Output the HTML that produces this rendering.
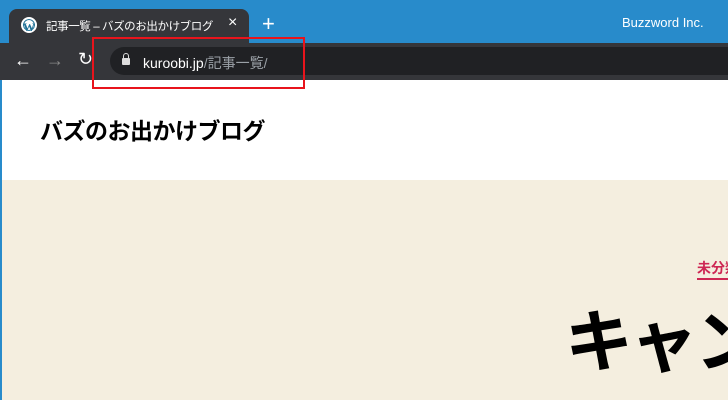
<!DOCTYPE html>
<html><head><meta charset="utf-8"><style>
*{margin:0;padding:0;box-sizing:border-box}
html,body{width:728px;height:400px;overflow:hidden}
body{position:relative;background:#f4eedf;font-family:"Liberation Sans","Noto Sans CJK JP",sans-serif}
.a{position:absolute;white-space:nowrap}
#clip{position:absolute;left:0;top:0;width:728px;height:400px;overflow:hidden}
</style></head><body><div id="clip">
<div class="a" style="left:0;top:0;width:728px;height:43px;background:#288bcb"></div>
<div class="a" style="left:9px;top:9px;width:240px;height:36px;background:#35363a;border-radius:8px 8px 0 0"></div>
<div class="a" style="left:21px;top:17px;width:16px;height:16px;border-radius:50%;background:#fff;color:#207196;font:bold 12px 'Liberation Serif',serif;text-align:center;line-height:16px;border:2px solid #fff;box-shadow:inset 0 0 0 1px #207196">W</div>
<div class="a" style="left:46px;top:18px;color:#fff;font-size:11.5px;letter-spacing:-0.4px">記事一覧 – バズのお出かけブログ</div>
<div class="a" style="left:228px;top:14px;color:#fff;font-size:16px">×</div>
<div class="a" style="left:262px;top:12px;color:#fff;font-size:22px;line-height:24px">+</div>
<div class="a" style="left:622px;top:15px;color:#fff;font-size:13px">Buzzword Inc.</div>
<div class="a" style="left:0;top:43px;width:728px;height:37px;background:#35363a"></div>
<div class="a" style="left:14px;top:50px;color:#fff;font-size:18px">←</div>
<div class="a" style="left:46px;top:50px;color:#888;font-size:18px">→</div>
<div class="a" style="left:78px;top:49px;color:#fff;font-size:18px">↻</div>
<div class="a" style="left:110px;top:47px;width:618px;height:28px;background:#202124;border-radius:14px 0 0 14px"></div>
<div class="a" style="left:122px;top:58px;width:8px;height:7px;background:#ddd;border-radius:1px"></div>
<div class="a" style="left:123px;top:53px;width:6px;height:7px;border:1.5px solid #ddd;border-radius:3px 3px 0 0"></div>
<div class="a" style="left:143px;top:53px;font-size:14px;color:#fff">kuroobi.jp<span style="color:#9aa0a6">/記事一覧/</span></div>
<div class="a" style="left:0;top:80px;width:728px;height:100px;background:#fff"></div>
<div class="a" style="left:0;top:80px;width:2px;height:320px;background:#288bcb"></div>
<div class="a" style="left:40px;top:112px;font-size:23px;font-weight:bold;color:#000;letter-spacing:-0.5px">バズのお出かけブログ</div>
<div class="a" style="left:92px;top:37px;width:213px;height:52px;border:2px solid #e8141c"></div>
<div class="a" style="left:697px;top:258px;width:31px;overflow:hidden;font-size:14px;font-weight:bold;color:#cd2653;border-bottom:2px solid #cd2653;line-height:20px">未分類</div>
<div class="a" style="left:565px;top:302px;font-size:68px;font-weight:bold;color:#000;line-height:82px;letter-spacing:-3px">キャンプ</div>
</div></body></html>
